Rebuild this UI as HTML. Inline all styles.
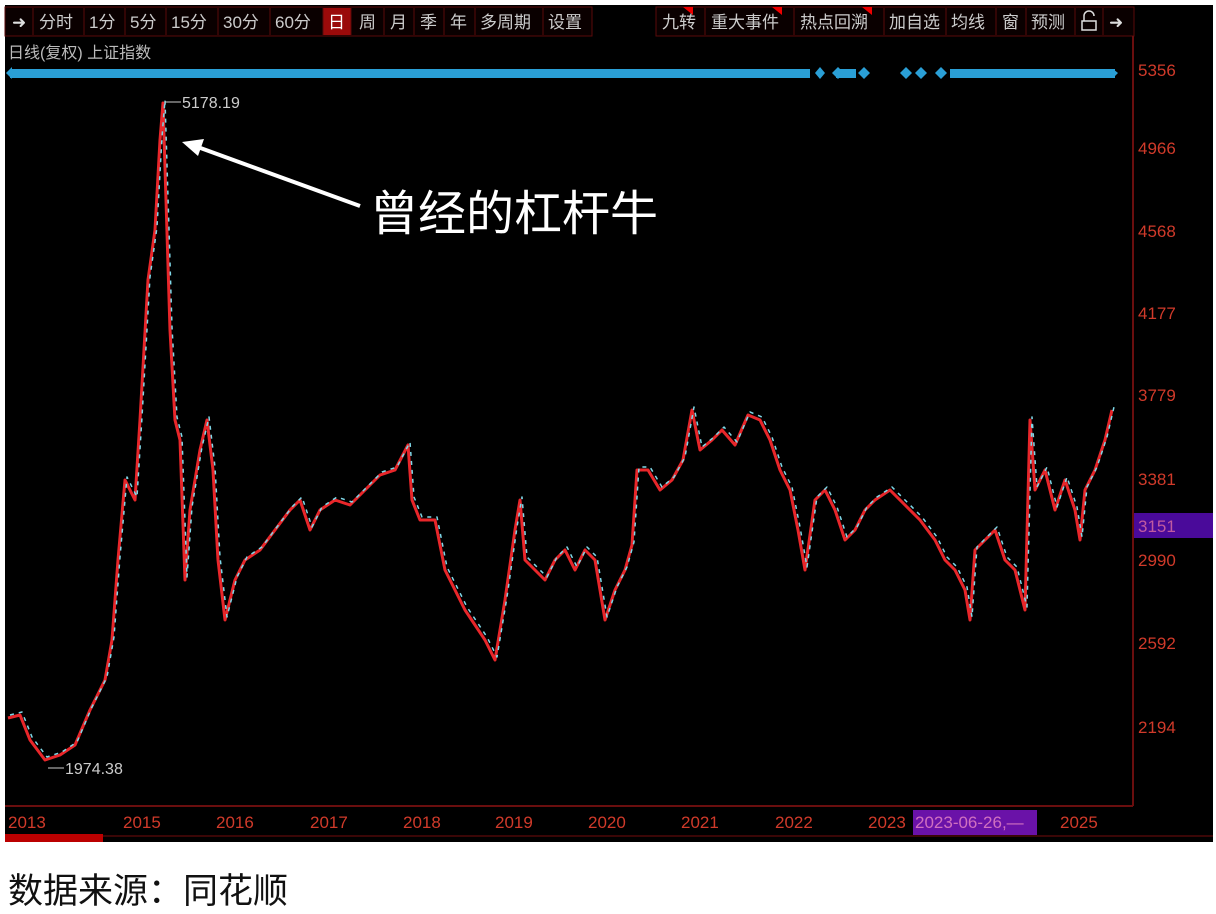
<!DOCTYPE html>
<html><head><meta charset="utf-8"><style>
html,body{margin:0;padding:0;background:#fff;width:1216px;height:914px;overflow:hidden}
body{font-family:"Liberation Sans","Noto Sans CJK SC",sans-serif}
</style></head><body>
<svg width="1216" height="914" xmlns="http://www.w3.org/2000/svg" style="position:absolute;left:0;top:0">
<rect x="5" y="5" width="1208" height="837" fill="#000"/>
<g font-family="Liberation Sans,Noto Sans CJK SC,sans-serif" font-size="17" fill="#ccc">
<rect x="5" y="7" width="587" height="29" fill="#0a0000" stroke="#5a0a0a"/>
<rect x="323" y="8" width="28" height="27" fill="#9a0a0a"/>
<g stroke="#5a0a0a"><line x1="33" y1="8" x2="33" y2="35"/><line x1="84" y1="8" x2="84" y2="35"/><line x1="125" y1="8" x2="125" y2="35"/><line x1="166" y1="8" x2="166" y2="35"/><line x1="218" y1="8" x2="218" y2="35"/><line x1="270" y1="8" x2="270" y2="35"/><line x1="323" y1="8" x2="323" y2="35"/><line x1="351" y1="8" x2="351" y2="35"/><line x1="384" y1="8" x2="384" y2="35"/><line x1="414" y1="8" x2="414" y2="35"/><line x1="444" y1="8" x2="444" y2="35"/><line x1="475" y1="8" x2="475" y2="35"/><line x1="543" y1="8" x2="543" y2="35"/></g>
<text x="12" y="28" fill="#ddd">➜</text>
<text x="39" y="28">分时</text><text x="89" y="28">1分</text><text x="130" y="28">5分</text><text x="171" y="28">15分</text><text x="223" y="28">30分</text><text x="275" y="28">60分</text>
<text x="328" y="28" fill="#fff">日</text><text x="359" y="28">周</text><text x="390" y="28">月</text><text x="420" y="28">季</text><text x="450" y="28">年</text><text x="480" y="28">多周期</text><text x="548" y="28">设置</text>
<rect x="656" y="7" width="478" height="29" fill="#0a0000" stroke="#5a0a0a"/>
<g stroke="#5a0a0a"><line x1="705" y1="8" x2="705" y2="35"/><line x1="794" y1="8" x2="794" y2="35"/><line x1="884" y1="8" x2="884" y2="35"/><line x1="946" y1="8" x2="946" y2="35"/><line x1="996" y1="8" x2="996" y2="35"/><line x1="1026" y1="8" x2="1026" y2="35"/><line x1="1075" y1="8" x2="1075" y2="35"/><line x1="1103" y1="8" x2="1103" y2="35"/></g>
<polygon points="683,7 693,7 693,15" fill="#e00"/><polygon points="772,7 782,7 782,15" fill="#e00"/><polygon points="862,7 872,7 872,15" fill="#e00"/>
<text x="662" y="28">九转</text><text x="711" y="28">重大事件</text><text x="800" y="28">热点回溯</text><text x="889" y="28">加自选</text><text x="951" y="28">均线</text><text x="1002" y="28">窗</text><text x="1031" y="28">预测</text>
<path d="M1082 30 h14 v-9 h-14 z M1084 21 v-5 a5 5 0 0 1 10 0" fill="none" stroke="#ddd" stroke-width="1.5"/>
<text x="1109" y="28" fill="#ddd">➜</text>
<text x="8" y="58" font-size="16" fill="#bbb">日线(复权) 上证指数</text>
</g>
<rect x="10" y="69" width="800" height="9" fill="#2a9fd6"/>
<polygon points="6,73 12,67 12,79" fill="#2a9fd6"/>
<g fill="#2a9fd6"><polygon points="815,73 820,67 825,73 820,79"/><polygon points="832,73 838,67 844,73 838,79"/><rect x="836" y="69" width="20" height="9"/><polygon points="858,73 864,67 870,73 864,79"/><polygon points="900,73 906,67 912,73 906,79"/><polygon points="915,73 921,67 927,73 921,79"/><polygon points="935,73 941,67 947,73 941,79"/><rect x="950" y="69" width="165" height="9"/><polygon points="1113,69 1118,73 1113,78"/></g>
<line x1="1133" y1="36" x2="1133" y2="806" stroke="#6a0e0e" stroke-width="2"/>
<line x1="5" y1="806" x2="1133" y2="806" stroke="#6a0e0e" stroke-width="2"/>
<line x1="5" y1="836" x2="1213" y2="836" stroke="#3a0606" stroke-width="2"/>
<rect x="5" y="834" width="98" height="8" fill="#b00"/>
<g font-size="17" fill="#d03a2a" font-family="Liberation Sans,sans-serif">
<text x="1138" y="76">5356</text><text x="1138" y="154">4966</text><text x="1138" y="237">4568</text><text x="1138" y="319">4177</text><text x="1138" y="401">3779</text><text x="1138" y="485">3381</text>
<rect x="1134" y="513" width="79" height="25" fill="#4a0a9a"/><text x="1138" y="532" fill="#c05aa0">3151</text>
<text x="1138" y="566">2990</text><text x="1138" y="649">2592</text><text x="1138" y="733">2194</text>
</g>
<g font-size="17" fill="#d03a2a" font-family="Liberation Sans,sans-serif">
<text x="8" y="828">2013</text><text x="123" y="828">2015</text><text x="216" y="828">2016</text><text x="310" y="828">2017</text><text x="403" y="828">2018</text><text x="495" y="828">2019</text><text x="588" y="828">2020</text><text x="681" y="828">2021</text><text x="775" y="828">2022</text><text x="868" y="828">2023</text>
<rect x="913" y="810" width="124" height="25" fill="#6a12a8"/><text x="915" y="828" fill="#d070c0">2023-06-26,—</text>
<text x="1060" y="828">2025</text>
</g>
<g fill="none" stroke-linejoin="round">
<polyline stroke="#e8262a" stroke-width="3" points="8,718 20,715 30,740 45,760 60,755 75,745 90,710 105,680 112,640 118,560 125,480 135,500 140,420 148,280 155,230 160,140 163,103 166,200 170,330 175,420 180,440 185,580 190,510 200,450 207,420 213,470 218,560 225,620 235,580 245,560 260,550 275,530 290,510 300,500 310,530 320,510 335,500 350,505 365,490 380,475 395,470 408,445 412,500 420,520 435,520 445,570 455,590 465,610 475,625 485,640 495,660 505,600 515,530 520,500 525,560 535,570 545,580 555,560 565,550 575,570 585,550 595,560 605,620 615,590 625,570 632,545 637,470 648,470 660,490 672,480 683,460 692,410 700,450 712,440 722,430 735,445 748,415 760,420 770,440 780,470 790,490 798,530 805,570 815,500 825,490 835,510 845,540 855,530 865,510 875,500 890,490 905,505 920,520 935,540 945,560 955,570 965,590 970,620 975,550 985,540 995,530 1005,560 1015,570 1025,610 1030,420 1035,490 1045,470 1055,510 1065,480 1075,510 1080,540 1085,490 1095,470 1105,440 1112,410"/>
<polyline stroke="#7fd8e8" stroke-width="1.5" stroke-dasharray="4 5" transform="translate(2,-3)" points="8,718 20,715 30,740 45,760 60,755 75,745 90,710 105,680 112,640 118,560 125,480 135,500 140,420 148,280 155,230 160,140 163,103 166,200 170,330 175,420 180,440 185,580 190,510 200,450 207,420 213,470 218,560 225,620 235,580 245,560 260,550 275,530 290,510 300,500 310,530 320,510 335,500 350,505 365,490 380,475 395,470 408,445 412,500 420,520 435,520 445,570 455,590 465,610 475,625 485,640 495,660 505,600 515,530 520,500 525,560 535,570 545,580 555,560 565,550 575,570 585,550 595,560 605,620 615,590 625,570 632,545 637,470 648,470 660,490 672,480 683,460 692,410 700,450 712,440 722,430 735,445 748,415 760,420 770,440 780,470 790,490 798,530 805,570 815,500 825,490 835,510 845,540 855,530 865,510 875,500 890,490 905,505 920,520 935,540 945,560 955,570 965,590 970,620 975,550 985,540 995,530 1005,560 1015,570 1025,610 1030,420 1035,490 1045,470 1055,510 1065,480 1075,510 1080,540 1085,490 1095,470 1105,440 1112,410"/>
</g>
<g font-size="16" fill="#ccc" font-family="Liberation Sans,sans-serif">
<line x1="165" y1="102" x2="181" y2="102" stroke="#ccc"/><text x="182" y="108">5178.19</text>
<line x1="48" y1="768" x2="64" y2="768" stroke="#ccc"/><text x="65" y="774">1974.38</text>
</g>
<line x1="360" y1="206" x2="195" y2="146" stroke="#fff" stroke-width="4"/>
<polygon points="182,142 204,139 198,156" fill="#fff"/>
<text x="370" y="230" font-size="48" fill="#fff" font-family="Noto Sans CJK SC,sans-serif">曾经的杠杆牛</text>
<text x="8" y="903" font-size="35" fill="#111" font-family="Noto Sans CJK SC,sans-serif">数据来源：同花顺</text>
</svg>
</body></html>
